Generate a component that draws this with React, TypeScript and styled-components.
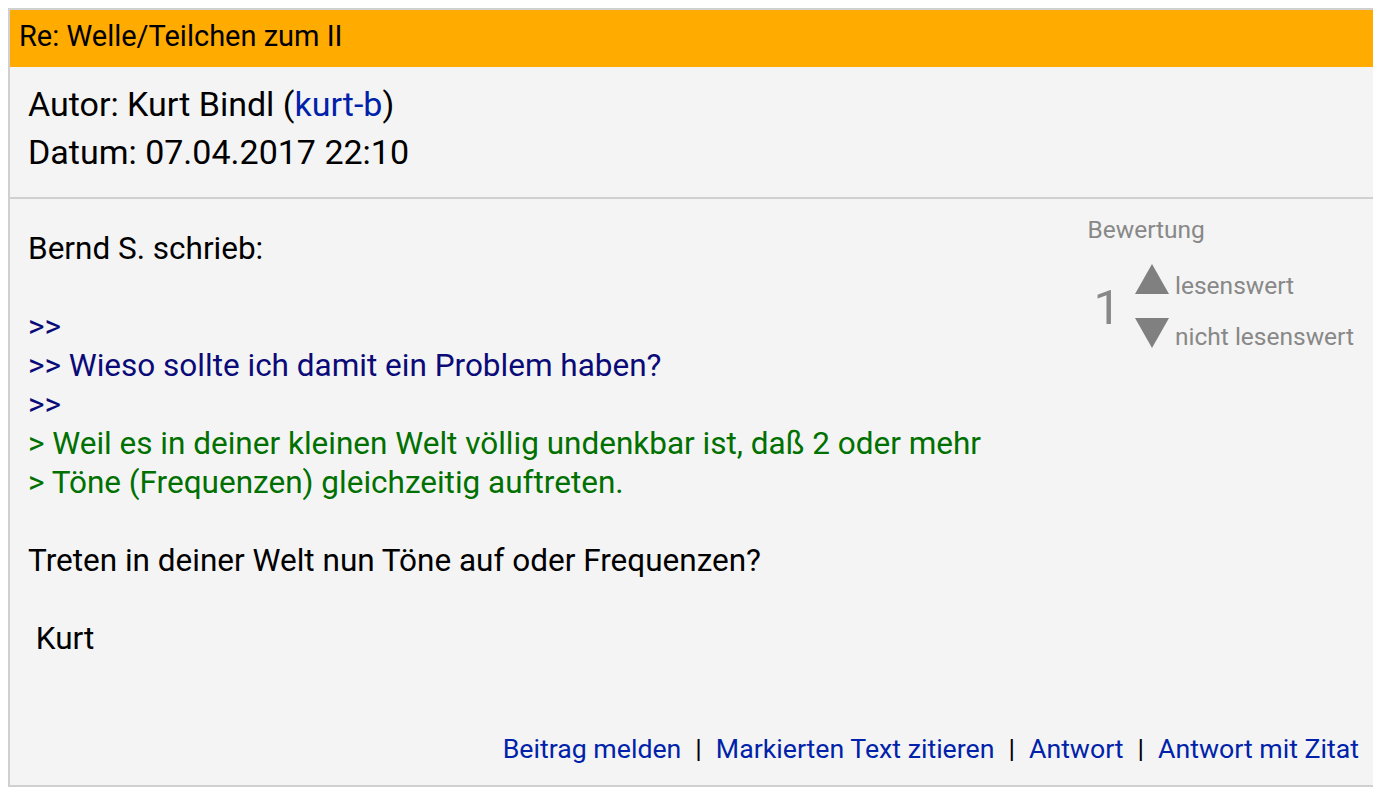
import styled, { createGlobalStyle } from 'styled-components';

const GlobalStyle = createGlobalStyle`
  body {
    margin: 8px;
    background: #fff;
    font-family: Roboto, "Liberation Sans", sans-serif;
  }
`;

const Post = styled.article`
  width: 1368px;
  box-sizing: border-box;
  border: 2px solid #d0d0d0;
  background: #f4f4f4;
  color: #000;
`;

const Header = styled.div`
  height: 57px;
  box-sizing: border-box;
  display: flex;
  align-items: center;
  padding: 0 9px 5px;
  background: #ffab00;
  font-size: 29px;
`;

const Meta = styled.div`
  padding: 13px 18px 21px;
  border-bottom: 2px solid #d0d0d0;
  font-size: 34px;
  line-height: 48px;
`;

const Link = styled.a`
  color: #0022aa;
  text-decoration: none;
`;

const Content = styled.div`
  display: flex;
  justify-content: space-between;
  padding: 30px 20px 0 18px;
`;

const Text = styled.div`
  font-size: 31.5px;
  line-height: 39px;
  white-space: pre;
`;

const Line = styled.div<{ $tone?: 'quote2' | 'quote1' }>`
  color: ${p => (p.$tone === 'quote2' ? '#0a0a78' : p.$tone === 'quote1' ? '#007000' : '#000')};
  min-height: 39px;
`;

const Rating = styled.aside`
  color: #888;
  font-size: 24.5px;
  line-height: 28px;
  margin-top: -13px;
`;

const RatingLabel = styled.div`
  margin-bottom: 20px;
`;

const RatingRow = styled.div`
  display: flex;
  align-items: center;
  gap: 14px;
  padding-left: 6px;
`;

const Score = styled.div`
  font-size: 49px;
  line-height: 56px;
`;

const Votes = styled.div`
  display: flex;
  flex-direction: column;
  gap: 14px;
`;

const Vote = styled.div`
  display: flex;
  align-items: baseline;
  gap: 6px;
  line-height: 30px;
`;

const ArrowSvg = styled.svg<{ $down?: boolean }>`
  position: relative;
  top: ${p => (p.$down ? 3 : 0)}px;
  flex: none;
`;

const Arrow = ({ down }: { down?: boolean }) => (
  <ArrowSvg $down={down} width="34" height="30" viewBox="0 0 34 30">
    <polygon points={down ? '0,0 34,0 17,30' : '17,0 34,30 0,30'} fill="#808080" />
  </ArrowSvg>
);

const Footer = styled.div`
  display: flex;
  justify-content: flex-end;
  align-items: center;
  padding: 73px 15px 18px 0;
  font-size: 26.7px;
  line-height: 36px;
`;

const Sep = styled.span`
  color: #000;
  margin: 0 14px;
`;

const lines: { text: string; tone?: 'quote2' | 'quote1' }[] = [
  { text: 'Bernd S. schrieb:' },
  { text: '' },
  { text: '>>', tone: 'quote2' },
  { text: '>> Wieso sollte ich damit ein Problem haben?', tone: 'quote2' },
  { text: '>>', tone: 'quote2' },
  { text: '> Weil es in deiner kleinen Welt völlig undenkbar ist, daß 2 oder mehr', tone: 'quote1' },
  { text: '> Töne (Frequenzen) gleichzeitig auftreten.', tone: 'quote1' },
  { text: '' },
  { text: 'Treten in deiner Welt nun Töne auf oder Frequenzen?' },
  { text: '' },
  { text: ' Kurt' },
];

const actions = ['Beitrag melden', 'Markierten Text zitieren', 'Antwort', 'Antwort mit Zitat'];

export default function App() {
  return (
    <>
      <GlobalStyle />
      <Post>
        <Header>Re: Welle/Teilchen zum II</Header>
        <Meta>
          <div>
            Autor: Kurt Bindl (<Link href="#">kurt-b</Link>)
          </div>
          <div>Datum: 07.04.2017 22:10</div>
        </Meta>
        <Content>
          <Text>
            {lines.map((l, i) => (
              <Line key={i} $tone={l.tone}>
                {l.text}
              </Line>
            ))}
          </Text>
          <Rating>
            <RatingLabel>Bewertung</RatingLabel>
            <RatingRow>
              <Score>1</Score>
              <Votes>
                <Vote>
                  <Arrow />
                  lesenswert
                </Vote>
                <Vote>
                  <Arrow down />
                  nicht lesenswert
                </Vote>
              </Votes>
            </RatingRow>
          </Rating>
        </Content>
        <Footer>
          {actions.map((a, i) => (
            <span key={a}>
              {i > 0 && <Sep>|</Sep>}
              <Link href="#">{a}</Link>
            </span>
          ))}
        </Footer>
      </Post>
    </>
  );
}
